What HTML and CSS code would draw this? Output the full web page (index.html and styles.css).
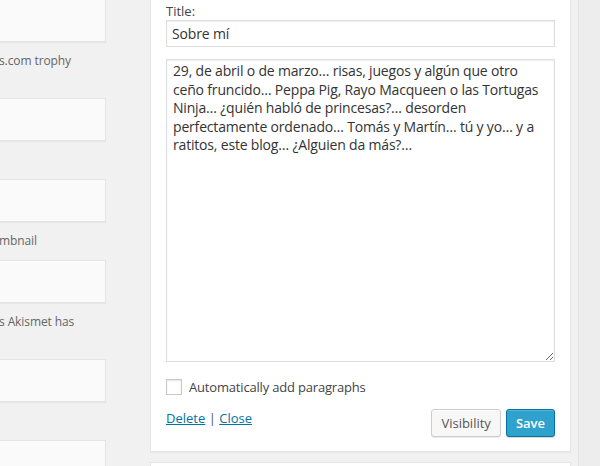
FILE: index.html
```html
<!DOCTYPE html>
<html lang="es">
<head>
<meta charset="utf-8">
<title>Widget</title>
<link rel="stylesheet" href="styles.css">
</head>
<body>
<div class="page">
  <div class="available">
    <div class="widget first">
      <div class="widget-top"></div>
      <div class="widget-desc two">s.com trophy</div>
    </div>
    <div class="widget">
      <div class="widget-top"></div>
      <div class="widget-desc"></div>
    </div>
    <div class="widget">
      <div class="widget-top"></div>
      <div class="widget-desc">mbnail</div>
    </div>
    <div class="widget">
      <div class="widget-top"></div>
      <div class="widget-desc two">s Akismet has</div>
    </div>
    <div class="widget">
      <div class="widget-top"></div>
      <div class="widget-desc"></div>
    </div>
    <div class="widget">
      <div class="widget-top"></div>
    </div>
  </div>

  <div class="sidebar">
    <div class="panel">
      <label class="field-label" for="title">Title:</label>
      <input class="text-input" id="title" type="text" value="Sobre mí">
      <textarea class="text-area">29, de abril o de marzo… risas, juegos y algún que otro ceño fruncido… Peppa Pig, Rayo Macqueen o las Tortugas Ninja… ¿quién habló de princesas?… desorden perfectamente ordenado… Tomás y Martín… tú y yo… y a ratitos, este blog… ¿Alguien da más?…</textarea>
      <label class="check-row"><span class="checkbox"></span>Automatically add paragraphs</label>
      <div class="actions">
        <div class="links"><a href="#">Delete</a> <span class="sep">|</span> <a href="#">Close</a></div>
        <div class="buttons">
          <button class="button" type="button">Visibility</button>
          <button class="button primary" type="button">Save</button>
        </div>
      </div>
    </div>
    <div class="panel next"></div>
  </div>

  <div class="strip"></div>
</div>
</body>
</html>
```

FILE: styles.css
```css
html, body {
  margin: 0;
  padding: 0;
  background: #f1f1f1;
}

body {
  font-family: "Open Sans", "Noto Sans", sans-serif;
  font-size: 13px;
  line-height: 18px;
  color: #444;
}

.page {
  display: flex;
  width: 600px;
  height: 466px;
  overflow: hidden;
}

.available {
  width: 150px;
  flex: none;
}

.widget.first {
  margin-top: -1px;
}

.widget-top {
  width: 106px;
  height: 43px;
  box-sizing: border-box;
  background: #fafafa;
  border: 1px solid #e5e5e5;
  border-left: none;
  box-shadow: 0 1px 1px rgba(0, 0, 0, 0.04);
}

.widget-desc {
  padding: 10px 0 10px 0;
  height: 18px;
  font-size: 12px;
  letter-spacing: -0.1px;
  color: #666;
  white-space: nowrap;
  margin-left: -1px;
}

.widget-desc.two {
  height: 36px;
}

.sidebar {
  width: 421px;
  flex: none;
}

.panel {
  background: #fff;
  border: 1px solid #e5e5e5;
  box-shadow: 0 1px 1px rgba(0, 0, 0, 0.04);
  margin-top: -1px;
  padding: 2px 15px 14px;
}

.panel.next {
  margin-top: 10px;
  height: 40px;
}

.field-label {
  display: block;
  color: #444;
}

.text-input {
  display: block;
  width: 100%;
  height: 27px;
  box-sizing: border-box;
  margin: 0;
  padding: 3px 5px;
  border: 1px solid #ddd;
  box-shadow: inset 0 1px 2px rgba(0, 0, 0, 0.07);
  font-family: "Open Sans", "Noto Sans", sans-serif;
  font-size: 14px;
  letter-spacing: -0.15px;
  color: #333;
  outline: none;
}

.text-area {
  display: block;
  width: 100%;
  height: 303px;
  box-sizing: border-box;
  margin: 12px 0 0;
  padding: 2px 6px;
  border: 1px solid #ddd;
  box-shadow: inset 0 1px 2px rgba(0, 0, 0, 0.07);
  font-family: "Open Sans", "Noto Sans", sans-serif;
  font-size: 14px;
  line-height: 18.6px;
  letter-spacing: -0.18px;
  color: #333;
  outline: none;
}

.check-row {
  display: flex;
  align-items: center;
  margin-top: 16px;
  height: 18px;
  letter-spacing: -0.18px;
  color: #444;
}

.checkbox {
  width: 16px;
  height: 16px;
  box-sizing: border-box;
  border: 1px solid #c8c8c8;
  box-shadow: inset 0 1px 2px rgba(0, 0, 0, 0.1);
  background: #fff;
  margin-right: 7px;
  flex: none;
}

.actions {
  display: flex;
  justify-content: space-between;
  align-items: flex-start;
  margin-top: 13px;
}

.links a {
  color: #0074a2;
  text-decoration: underline;
}

.sep {
  color: #555;
}

.buttons {
  display: flex;
  gap: 5px;
}

.button {
  height: 28px;
  box-sizing: border-box;
  margin: 0;
  padding: 0 9px 1px;
  font-family: "Open Sans", "Noto Sans", sans-serif;
  font-size: 13px;
  line-height: 26px;
  color: #555;
  background: #f7f7f7;
  border: 1px solid #ccc;
  border-radius: 3px;
  box-shadow: inset 0 1px 0 #fff, 0 1px 0 rgba(0, 0, 0, 0.08);
}

.button.primary {
  color: #fff;
  font-weight: 600;
  background: #2ea2cc;
  border-color: #0074a2;
  box-shadow: inset 0 1px 0 rgba(120, 200, 230, 0.5), 0 1px 0 rgba(0, 0, 0, 0.15);
}

.strip {
  flex: 1;
  margin-left: 7px;
  border-left: 1px solid #e3e3e3;
  background: #ededed;
}
```
